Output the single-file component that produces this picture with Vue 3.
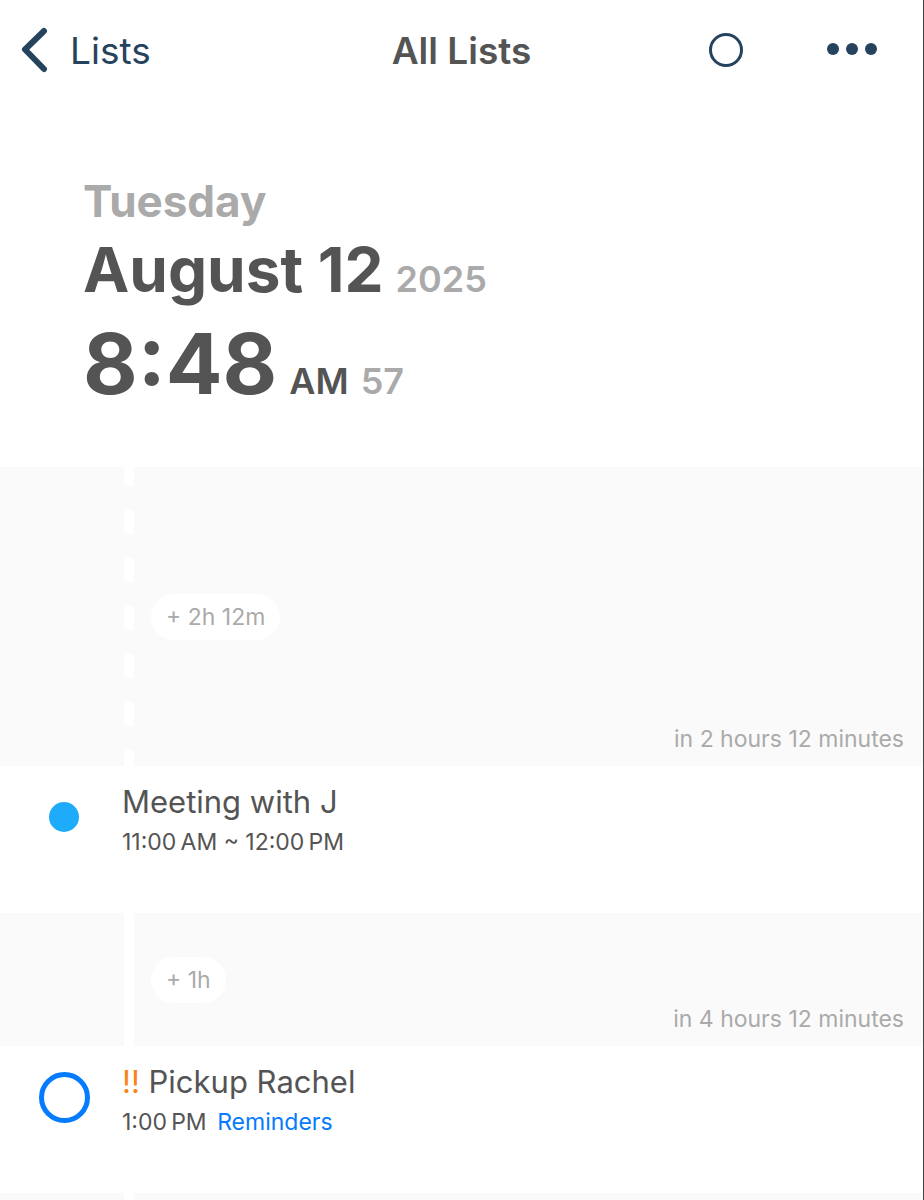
<template>
  <div class="page">
    <header class="topbar">
      <a class="back" href="#lists">
        <svg class="back-icon" viewBox="0 0 28 46" aria-hidden="true">
          <path
            d="M24 4 5 22.500 24 42"
            stroke="currentColor"
            stroke-width="6"
            fill="none"
            stroke-linecap="round"
            stroke-linejoin="round"
          />
        </svg>
        <span>Lists</span>
      </a>
      <h1 class="title">All Lists</h1>
      <div class="actions">
        <button type="button" class="icon-button" aria-label="Filter">
          <svg class="ring-icon" viewBox="0 0 34 34" aria-hidden="true">
            <circle cx="17" cy="17" r="15.500" stroke="currentColor" stroke-width="3" fill="none" />
          </svg>
        </button>
        <button type="button" class="icon-button" aria-label="More">
          <svg class="more-icon" viewBox="0 0 52 16" aria-hidden="true">
            <g fill="currentColor">
              <circle cx="7" cy="7" r="6" />
              <circle cx="26" cy="7" r="6" />
              <circle cx="45" cy="7" r="6" />
            </g>
          </svg>
        </button>
      </div>
    </header>

    <section class="clock">
      <p class="weekday">{{ now.weekday }}</p>
      <p class="date">
        <span>{{ now.date }}</span>
        <span class="small muted">{{ now.year }}</span>
      </p>
      <p class="time">
        <span>{{ now.time }}</span>
        <span class="small">{{ now.period }}</span>
        <span class="small muted">{{ now.seconds }}</span>
      </p>
    </section>

    <main class="timeline">
      <template v-for="item in items" :key="item.id">
        <div class="gap" :class="{ tall: item.dashed }">
          <svg v-if="item.dashed" class="rail" aria-hidden="true">
            <defs>
              <pattern id="dash" y="-5" width="10" height="48" patternUnits="userSpaceOnUse">
                <rect width="10" height="24" rx="3" fill="#fff" />
              </pattern>
            </defs>
            <rect width="10" height="100%" fill="url(#dash)" />
          </svg>
          <span v-else class="rail solid"></span>
          <button type="button" class="pill">+ {{ item.free }}</button>
          <span class="until">{{ item.until }}</span>
        </div>
        <article class="entry">
          <div class="marker">
            <input
              v-if="item.task"
              :id="item.id"
              v-model="item.done"
              type="checkbox"
              class="check"
            />
            <span v-else class="dot"></span>
          </div>
          <div class="info">
            <label v-if="item.task" class="name" :for="item.id">
              <span class="priority">{{ item.priority }}</span> {{ item.name }}
            </label>
            <h2 v-else class="name">{{ item.name }}</h2>
            <p class="when">
              {{ item.when }}
              <a v-if="item.list" class="list-link" href="#reminders">{{ item.list }}</a>
            </p>
          </div>
        </article>
      </template>
      <div class="gap rest">
        <span class="rail solid"></span>
      </div>
    </main>
  </div>
</template>

<script setup>
import { ref } from "vue";

const now = {
  weekday: "Tuesday",
  date: "August 12",
  year: "2025",
  time: "8:48",
  period: "AM",
  seconds: "57",
};

// \u2009 is the thin space in front of AM and PM
const items = ref([
  {
    id: "meeting",
    name: "Meeting with J",
    when: "11:00\u2009AM ~ 12:00\u2009PM",
    free: "2h 12m",
    until: "in 2 hours 12 minutes",
    dashed: true,
  },
  {
    id: "pickup",
    name: "Pickup Rachel",
    when: "1:00\u2009PM",
    free: "1h",
    until: "in 4 hours 12 minutes",
    task: true,
    done: false,
    priority: "!!",
    list: "Reminders",
  },
]);
</script>

<style>
body {
  margin: 0;
}
</style>

<style scoped>
.page {
  display: flex;
  flex-direction: column;
  box-sizing: border-box;
  min-height: 100vh;
  border-right: 1px solid #444;
  background: #fff;
  color: #545454;
  font-family: Inter, "Liberation Sans", sans-serif;
}

h1,
h2,
p {
  margin: 0;
}

.topbar {
  display: grid;
  grid-template-columns: 1fr auto 1fr;
  align-items: center;
  height: 100px;
  padding: 0 20px;
  color: #26435e;
  font-size: 37px;
}

.back {
  display: flex;
  align-items: center;
  gap: 22px;
  color: inherit;
  text-decoration: none;
}

.back-icon {
  width: 28px;
  height: 46px;
}

.title {
  color: #545454;
  font-size: 37px;
  font-weight: 600;
}

.actions {
  display: flex;
  justify-content: flex-end;
  align-items: center;
  gap: 83px;
  padding-right: 25px;
}

.icon-button {
  display: flex;
  padding: 0;
  border: 0;
  background: none;
  color: inherit;
  cursor: pointer;
}

.ring-icon {
  width: 34px;
  height: 34px;
}

.more-icon {
  width: 52px;
  height: 16px;
}

.clock {
  padding: 73px 83px 50px;
  font-weight: 700;
}

.weekday {
  color: #aaa;
  font-size: 44px;
  line-height: 56px;
}

.date,
.time {
  display: flex;
  align-items: baseline;
  gap: 12px;
}

.date {
  font-size: 62px;
  line-height: 82px;
}

.time {
  font-size: 84px;
  line-height: 106px;
}

.small {
  font-size: 36px;
  font-weight: 600;
  line-height: 44px;
}

.muted {
  color: #aaa;
}

.timeline {
  display: flex;
  flex: 1;
  flex-direction: column;
}

.gap {
  display: flex;
  align-items: center;
  box-sizing: border-box;
  min-height: 133px;
  padding: 0 19px 0 124px;
  background: #fafafa;
}

.gap.tall {
  min-height: 299px;
}

.gap.rest {
  flex: 1;
  min-height: 0;
}

.rail {
  align-self: stretch;
  width: 10px;
  height: auto;
  margin-right: 17px;
}

.rail.solid {
  background: #fff;
}

.pill {
  height: 46px;
  padding: 0 15px;
  border: 0;
  border-radius: 23px;
  background: #fff;
  color: #aaa;
  font-family: inherit;
  font-size: 23px;
  cursor: pointer;
}

.until {
  align-self: flex-end;
  margin-left: auto;
  padding-bottom: 12px;
  color: #aaa;
  font-size: 23px;
  line-height: 30px;
}

.entry {
  display: flex;
  box-sizing: border-box;
  min-height: 147px;
  padding-top: 16px;
}

.marker {
  display: flex;
  flex: none;
  align-items: center;
  justify-content: center;
  width: 84px;
  height: 70px;
  padding: 0 16px 0 22px;
}

.dot {
  width: 30px;
  height: 30px;
  border-radius: 50%;
  background: #1eabf9;
}

.check {
  appearance: none;
  box-sizing: border-box;
  width: 51px;
  height: 51px;
  margin: 0;
  border: 5px solid #057bfe;
  border-radius: 50%;
  background: #fff;
  cursor: pointer;
}

.check:checked {
  background: #057bfe;
}

.name {
  display: block;
  font-size: 31px;
  font-weight: 400;
  line-height: 40px;
}

.priority {
  color: #f98314;
}

.when {
  font-size: 23px;
  line-height: 40px;
}

.list-link {
  margin-left: 4px;
  color: #057bfe;
  text-decoration: none;
}
</style>
